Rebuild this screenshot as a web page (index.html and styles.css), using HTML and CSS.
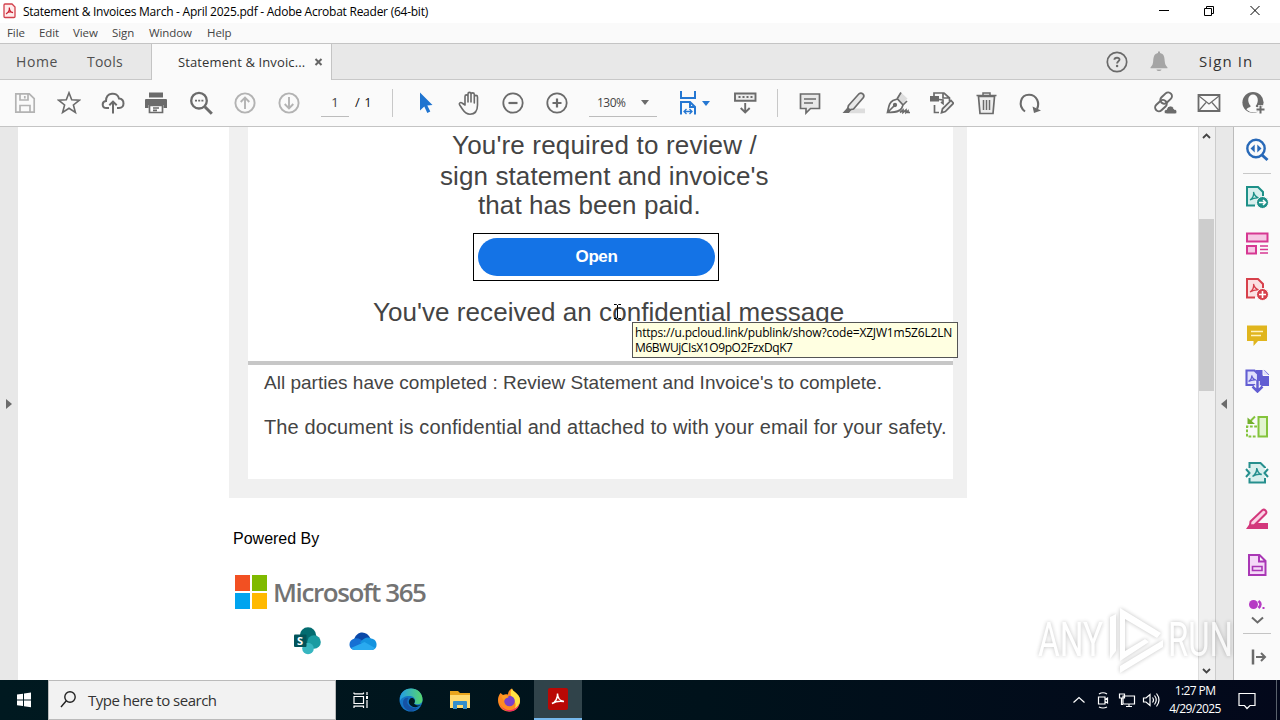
FILE: index.html
```html
<!DOCTYPE html>
<html lang="en">
<head>
<meta charset="utf-8">
<title>Statement &amp; Invoices March - April 2025.pdf - Adobe Acrobat Reader (64-bit)</title>
<link rel="stylesheet" href="styles.css">
</head>
<body>
<header class="titlebar">
  <svg class="app-icon" width="13" height="16" viewBox="0 0 13 16"><path d="M2 1h7l3 3v9.500q0 1-1 1H2q-1 0-1-1V2q0-1 1-1z" fill="#ffecec" stroke="#d3404c" stroke-width="1.300"/><path d="M3 11c2-1 3.600-4 3.300-6.500M6.300 4.500C6.500 7.500 8 9.500 10 9.600M3.500 10.500C5 9 8 8.700 10 9.600" fill="none" stroke="#c92030" stroke-width="1.200"/></svg>
  <span class="title-text">Statement &amp; Invoices March - April 2025.pdf - Adobe Acrobat Reader (64-bit)</span>
  <svg class="win-buttons" width="116" height="23" viewBox="0 0 116 23" fill="none" stroke="#000" stroke-width="1"><path d="M5 10.500h10M50.500 8.500h7v7h-7zM52.500 8.500v-2h7v7h-2M96.500 6l9 9M105.500 6l-9 9"/></svg>
</header>
<nav class="menubar"><span class="m-file">File</span><span class="m-edit">Edit</span><span class="m-view">View</span><span class="m-sign">Sign</span><span class="m-window">Window</span><span class="m-help">Help</span></nav>
<div class="tabs">
  <span class="tab-home">Home</span><span class="tab-tools">Tools</span>
  <div class="tab-doc"><span class="tab-label">Statement &amp; Invoic...</span><svg width="9" height="9" viewBox="0 0 9 9"><path d="M1.500 1l6 6M7.500 1l-6 6" stroke="#666" stroke-width="2"/></svg></div>
  <div class="account">
    <svg width="22" height="22" viewBox="0 0 22 22"><circle cx="11" cy="11" r="9.700" fill="none" stroke="#6a6a6a" stroke-width="1.700"/><path d="M8.400 8.700C8.500 6 13.700 6 13.500 8.800c-.1 1.600-2.400 1.500-2.400 3.700" fill="none" stroke="#6a6a6a" stroke-width="1.900"/><circle cx="11.100" cy="15" r="1.200" fill="#6a6a6a"/></svg>
    <svg class="bell" width="18" height="21" viewBox="0 0 18 21" fill="#a5a5a5"><path d="M8 2V.5h2V2c4 .8 4.500 4 4.700 8 .2 3 1 4.500 2.800 6.500v.8H.5v-.8C2.300 14.500 3 13 3.200 10 3.500 6 4 2.800 8 2zM6.500 18.500h5c-.5 2-4.500 2-5 0z"/></svg>
    <span class="signin">Sign In</span>
  </div>
</div>
<div class="toolbar">
  <div class="group first">
    <svg viewBox="0 0 24 24" fill="none" stroke="#b3b3b3" stroke-width="1.700"><path d="M2.800 2.800h13.500l4.900 4.900v13.500H2.800zM7 3v6h8V3M7 21v-6.500h10V21M11.800 5v2.500"/></svg>
    <svg viewBox="0 0 24 24" fill="none" stroke="#6b6b6b" stroke-width="1.600"><path d="M12 1.800l2.700 7 7.700.4-6 4.800 2 7.500-6.400-4.200-6.400 4.200 2-7.500-6-4.800 7.700-.4z"/></svg>
    <svg viewBox="0 0 24 24" fill="none" stroke="#6b6b6b" stroke-width="2"><path d="M8 17H5.500C.5 17 .5 10.500 5 10c0-9 11.500-9.500 13-2.500 6 .5 6 9.500 0 9.500h-2M12 22.500V11M8.300 14.300L12 10.600l3.700 3.700"/></svg>
    <svg viewBox="0 0 24 24"><path d="M4 1.500h14v5H4zM1 8h20q1 0 1 1v8h-3.500v-3h-15v3H0V9q0-1 1-1z" fill="#6b6b6b"/><path d="M4.500 14.500h13v7h-13zM8 17h6M8 19.300h4" fill="#fff" stroke="#6b6b6b" stroke-width="1.700"/></svg>
    <svg viewBox="0 0 24 24" fill="none" stroke="#6b6b6b" stroke-width="2.300"><circle cx="10" cy="9.700" r="7.800"/><path d="M15.800 15.700l7 7" stroke-width="3"/><path d="M6 9.700h2m1.200 0h2m1.200 0h2" stroke-width="1.800"/></svg>
    <svg viewBox="0 0 24 24" fill="none" stroke="#b3b3b3" stroke-width="1.900"><circle cx="12" cy="12" r="9.600"/><path d="M12 18V7M7.700 11L12 6.700l4.300 4.300"/></svg>
    <svg viewBox="0 0 24 24" fill="none" stroke="#b3b3b3" stroke-width="1.900"><circle cx="12" cy="12" r="9.600"/><path d="M12 6v11M7.700 13l4.300 4.300 4.300-4.300"/></svg>
  </div>
  <div class="pager"><span class="page-box">1</span><span class="page-total">/ 1</span></div>
  <div class="group">
    <svg viewBox="0 0 24 24" fill="#1f74d0"><path d="M7 1.500v18l4.300-4 3 6.500 3-1.400-3-6.100 5.200-.4z"/></svg>
    <svg viewBox="0 0 24 24" fill="none" stroke="#6b6b6b" stroke-width="1.600" stroke-linejoin="round"><g transform="translate(1 0)"><path d="M7 14V5.500c0-2.200 3-2.200 3 0V11 3c0-2.200 3-2.200 3 0v8 -7.500c0-2.200 3.300-2.200 3.300 0V12 6c0-2.200 3.200-2.200 3.200 0v8c0 6-3 9.200-7.500 9.200-4 0-5.500-2-7.500-5L1.700 14c-1.300-2 1-3.200 2.300-2z"/></g></svg>
    <svg viewBox="0 0 24 24" fill="none" stroke="#6b6b6b" stroke-width="1.800"><circle cx="12" cy="12" r="9.700"/><path d="M7.500 12h9" stroke-width="2.200"/></svg>
    <svg viewBox="0 0 24 24" fill="none" stroke="#6b6b6b" stroke-width="1.800"><circle cx="12" cy="12" r="9.700"/><path d="M7.500 12h9M12 7.500v9" stroke-width="2.200"/></svg>
  </div>
  <div class="zoom-box"><span class="zoom-value">130%</span><i class="caret"></i></div>
  <div class="fit"><svg viewBox="0 0 18 26" width="18" height="26" fill="none" stroke="#2577d2" stroke-width="2"><path d="M2 1v7h14V1M2 24.500V12h9l5 5v7.500M11 12v5h5"/><path d="M5 21.500h8M7.500 19L5 21.500 7.500 24M10.500 19l2.500 2.500-2.500 2.500" stroke-width="1.300"/></svg><i class="caret blue"></i></div>
  <div class="keyboard"><svg viewBox="0 0 24 24" fill="none" stroke="#6b6b6b" stroke-width="1.900"><path d="M2 2.500h20.500v7.200H2z" fill="#ededed"/><path d="M5.500 6h14" stroke-dasharray="2 2"/><path d="M12.200 12v9M7.700 17l4.500 4.500 4.500-4.500"/></svg></div>
  <div class="group">
    <svg viewBox="0 0 24 24" fill="#e8e8e8" stroke="#6b6b6b" stroke-width="1.700"><path d="M2.500 3h19v14.500h-9L8 22v-4.500H2.500z"/><path d="M6 8h12M6 12h9" stroke-width="1.300"/></svg>
    <svg viewBox="0 0 24 24" fill="#e8e8e8" stroke="#6b6b6b" stroke-width="1.700"><path d="M12 17.500h11v4.800H7z" stroke="none" fill="#ddd"/><path d="M6.500 14.500L17 2.800q2-1.600 3.800.1t.6 3.700L11.500 18l-4 .8-1.700-1.600z"/><path d="M5.500 16.500L.5 22h6.500l2.500-3z" fill="#6b6b6b" stroke="none"/></svg>
    <svg viewBox="0 0 24 24" fill="none" stroke="#6b6b6b" stroke-width="1.700"><path d="M15 1.500l6.500 6-4.500 5-6-5z" fill="#ddd" stroke="none"/><path d="M1.500 21.500C3 15 3 12 7 9.500l4.500-1.500 5.500 6-1.500 3.500C13 21.500 8 21 1.500 21.500zM2 21l6.500-6.500M11 8l4-6.500M17 14l4-4"/><circle cx="9" cy="14" r="1.300" fill="#6b6b6b"/><path d="M14 21.500l3-2.500v2.500l3-2.500v2.500l2-1.500v1.500h2"/></svg>
    <svg viewBox="0 0 24 24" fill="none" stroke="#6b6b6b" stroke-width="1.700"><path d="M4 5V2h10l5.500 5v3M13 2v5h6M4.500 14v7.500H9"/><path d="M0 5h9v5.500H0z" fill="#6b6b6b" stroke="none"/><path d="M11.500 21.800l1-4L21 9.500l2.500 2.700-8.200 8.400z" fill="#eee"/><path d="M9 8.500l4 .5v3.500l-2-1.500"/></svg>
    <svg viewBox="0 0 24 24" fill="#eee" stroke="#6b6b6b" stroke-width="1.700"><g transform="translate(.5 0)"><path d="M4 5.500h16l-1.500 17h-13z"/><path d="M2 4.500h20M8.500 4V2h7v2M9 9v10M12 9v10M15 9v10" stroke-width="1.500"/></g></svg>
    <svg viewBox="0 0 24 24" fill="none" stroke="#6b6b6b" stroke-width="2.100"><path d="M7 20.500C-.5 15 2.500 3.800 11 3.800c8 0 11 8.500 8 14.200"/><path d="M14.500 15.500l1.500 6.500 7-2.500z" fill="#6b6b6b" stroke="none"/></svg>
  </div>
  <div class="group share">
    <svg viewBox="0 0 24 24" fill="none" stroke="#6b6b6b" stroke-width="2"><g transform="rotate(-43 10 11)"><rect x="8.500" y="6.500" width="13" height="7.500" rx="3.700"/><rect x="-.5" y="8.500" width="13" height="7.500" rx="3.700"/></g><path d="M14 23c-4 0-3.500-4.500-.5-4.500.8-4.800 7-4.500 7.500-.4 4 .4 3.500 4.900 1 4.900z" fill="#6b6b6b" stroke="#fafafa" stroke-width="1"/></svg>
    <svg viewBox="0 0 24 24" fill="none" stroke="#6b6b6b" stroke-width="1.800"><path d="M1.500 4h21v16h-21z"/><path d="M2 5l10 8 10-8M2 19.500l7-8M22 19.500l-7-8" stroke-width="1.200"/></svg>
    <svg viewBox="0 0 24 24"><circle cx="12" cy="11.500" r="10.600" fill="#6b6b6b"/><path d="M5.500 18.500c1-2.500 4-1.500 4.200-3.500C5.500 10.500 7 3.500 12 3.500S18.500 10.500 14.700 15c.3 2 3 1 4.300 3.500-4 4-9.500 4-13.500 0z" fill="#fafafa"/><path d="M14.500 18.500h9M19.500 14v9" stroke="#fafafa" stroke-width="4.500"/><path d="M15.500 18.500h8M19.500 14.500v8" stroke="#6b6b6b" stroke-width="2"/></svg>
  </div>
</div>
<main class="workspace">
  <aside class="left-rail"><i class="tri-right"></i></aside>
  <section class="document">
    <div class="page-frame">
      <div class="page">
        <p class="headline h1">You're required to review /</p>
        <p class="headline h2">sign statement and invoice's</p>
        <p class="headline h3">that has been paid.</p>
        <div class="link-box"><div class="open-button"><span class="open-label">Open</span></div></div>
        <p class="headline received">You've received an confidential message</p>
        <div class="rule"></div>
        <p class="note n1">All parties have completed : Review Statement and Invoice's to complete.</p>
        <p class="note n2">The document is confidential and attached to with your email for your safety.</p>
      </div>
    </div>
    <p class="powered">Powered By</p>
    <div class="ms-brand"><div class="ms-logo"><i class="red"></i><i class="green"></i><i class="cyan"></i><i class="yellow"></i></div><span class="ms-name">Microsoft 365</span></div>
    <div class="products">
      <svg width="27" height="28" viewBox="0 0 27 28"><circle cx="14" cy="8.500" r="8.200" fill="#036c70"/><circle cx="20" cy="15" r="6.800" fill="#1a9ba1"/><circle cx="14" cy="21.500" r="5.800" fill="#37b6c0"/><rect y="7.500" width="12.500" height="12.500" rx="1" fill="#03545a"/><text x="3" y="17.500" class="sp-letter">S</text></svg>
      <svg width="28" height="19" viewBox="0 0 28 19"><path d="M5 8C7-1.500 18-2 21.500 6.500L14 14z" fill="#0a48a8"/><path d="M6 18C-1 18-1.500 8 5.500 6.500c4-1 7 1.500 10 3.500l4 8z" fill="#1670d4"/><path d="M11 10.500c4-5 8-6 11-4 7 .5 7.500 11 1 11.500z" fill="#1493df"/><path d="M2 16l13.500-6L26 16q-1 2-4 2H6q-3 0-4-2z" fill="#29aaf0"/></svg>
    </div>
    <div class="tooltip"><span class="tip1">https://u.pcloud.link/publink/show?code=XZJW1m5Z6L2LN</span><span class="tip2">M6BWUjCIsX1O9pO2FzxDqK7</span></div>
    <svg class="cursor" width="9" height="17" viewBox="0 0 9 17"><path d="M1 1.500h2.500l1 1 1-1H8M4.500 2v13M1 15.500h2.500l1-1 1 1H8" fill="none" stroke="#000"/></svg>
  </section>
  <div class="scrollbar"><svg width="9" height="6" viewBox="0 0 9 6"><path d="M1 5l3.500-3.500L8 5" fill="none" stroke="#444" stroke-width="1.800"/></svg><div class="thumb"></div><svg class="down" width="9" height="6" viewBox="0 0 9 6"><path d="M1 1l3.500 3.500L8 1" fill="none" stroke="#444" stroke-width="1.800"/></svg></div>
  <aside class="right-rail"><i class="tri-left"></i></aside>
  <aside class="tools">
    <div class="tool search-tool"><svg viewBox="0 0 24 24" fill="none" stroke="#2869b8" stroke-width="2.400"><circle cx="11" cy="10.500" r="8.700"/><path d="M17 17l5.500 5" stroke-width="3"/><path d="M9.700 6.500v8L5.500 10.500zM12.300 6.500v8l4.200-4z" fill="#2869b8" stroke="none"/></svg></div>
    <div class="tool"><svg viewBox="0 0 24 24" fill="#d8efed" stroke="#1d9088" stroke-width="2"><path d="M10 20.500H2V2h11l5 5v4"/><path d="M5 15c3-2 4-5 3.500-8 1 4 3 5.500 6 6-3-.5-6 0-9.500 2" fill="none" stroke-width="1.200"/><circle cx="17.500" cy="17.500" r="6" fill="#1d9088" stroke="#fafafa" stroke-width="1"/><path d="M14 17.500h6M18 15l2.500 2.500L18 20" fill="none" stroke="#fff" stroke-width="1.500"/></svg></div>
    <div class="tool"><svg viewBox="0 0 24 24" fill="#f6c8e4" stroke="#d63892" stroke-width="2"><path d="M2 2.500h20.500v8H2zM2 15h9v7.500H2z"/><path d="M15 15h8M15 18.500h8M15 22h8" stroke-width="1.400"/></svg></div>
    <div class="tool"><svg viewBox="0 0 24 24" fill="#fbe1e2" stroke="#d7404b" stroke-width="2"><path d="M10 20.500H2V2h11l5 5v4"/><path d="M5 15c3-2 4-5 3.500-8 1 4 3 5.500 6 6-3-.5-6 0-9.500 2" fill="none" stroke-width="1.200"/><circle cx="17.500" cy="17.500" r="6" fill="#d7404b" stroke="#fafafa" stroke-width="1"/><path d="M14 17.500h7M17.500 14v7" stroke="#fff" stroke-width="1.600"/></svg></div>
    <div class="tool"><svg viewBox="0 0 24 24" fill="#e0b51d"><path d="M2 2.500h20v15.500H13l-4.500 5V18H2z"/><path d="M6 8.500h12M6 12.500h10" stroke="#fff3c0" stroke-width="1.700"/></svg></div>
    <div class="tool"><svg viewBox="0 0 24 24" fill="#e0e0fc" stroke="#625ed2" stroke-width="2.100"><path d="M12 2h7l4 4v10h-11z" fill="#625ed2"/><path d="M18 0v6.500h6" stroke="#fafafa" stroke-width="1"/><path d="M1.500 1.500H9.500l3.500 3.500v11H1.500z"/><path d="M3.500 12.500c3-2 3.500-3.500 3.200-6 .8 3 2 4.200 4.500 4.500-3-.4-5 0-7.700 1.500" fill="none" stroke-width="1.200"/><path d="M12.500 12v9.500M7.800 17.500l4.700 4.700 4.700-4.700" fill="none" stroke="#fafafa" stroke-width="4.500"/><path d="M12.500 11v11M7.500 17.500l5 5 5-5" fill="none" stroke="#625ed2" stroke-width="2.500"/></svg></div>
    <div class="tool"><svg viewBox="0 0 24 24" fill="none" stroke="#84c43c" stroke-width="2"><path d="M13.500 2h8.500v19.500h-8.500z" fill="#e2f4d0"/><path d="M12 11.500H2v10h10" stroke-dasharray="2.800 1.500"/><path d="M10 1.500L5 6.500" /><path d="M2.500 2.500V9H10z" fill="#73af2d" stroke="none"/></svg></div>
    <div class="tool"><svg viewBox="0 0 24 24" fill="#d8efed" stroke="#268f8e" stroke-width="2"><path d="M4.500 7V2h11L20 6.500V7M4.500 17v4.500H20V17"/><path d="M4 7h16v10H4z" stroke="none"/><path d="M1 8l3.500 4L1 16M23 8l-3.500 4 3.500 4" fill="none"/><path d="M7.500 15.500C11 13 12 11 11.800 7c.7 4.500 2 6 5 6.500-3.500-.7-6.500 0-9.300 2" fill="none" stroke-width="1.500"/></svg></div>
    <div class="tool"><svg viewBox="0 0 24 24" fill="#fbd3e6" stroke="#d3387c" stroke-width="2"><path d="M1 22l3.500-5H8l4-1h11v6z" fill="#d3387c" stroke="none"/><path d="M5.500 14.500L17.500 3q1.500-1 3 .5t.5 3L9.500 18l-4.500.5z"/></svg></div>
    <div class="tool"><svg viewBox="0 0 24 24" fill="#f4d9f7" stroke="#a937b5" stroke-width="2"><path d="M4 2h10.500l6 6v14H4zM14 2v6.500h6"/><path d="M7.500 13.500h9.500v4H7.500z" stroke-width="1.600"/></svg></div>
    <div class="tool cut"><svg width="18" height="9" viewBox="0 0 18 9"><circle cx="5.500" cy="4.500" r="4.500" fill="#b63bc4"/><path d="M10.500 1q4 3 0 7" fill="none" stroke="#b63bc4" stroke-width="2.500"/><path d="M14.500 7h2v2h-2z" fill="#b63bc4"/></svg></div>
    <svg class="more" width="13" height="8" viewBox="0 0 13 8"><path d="M1 1.500l5.500 5 5.500-5" fill="none" stroke="#6b6b6b" stroke-width="2"/></svg>
    <div class="collapse"><svg width="17" height="16" viewBox="0 0 17 16"><path d="M2 .5v15" stroke="#6b6b6b" stroke-width="2.500"/><path d="M5 8h9M10 4l4 4-4 4" fill="none" stroke="#6b6b6b" stroke-width="2"/></svg></div>
  </aside>
  <svg class="watermark" width="212" height="80" viewBox="0 0 212 80"><g class="wm-shape"><text x="4" y="53" textLength="65" lengthAdjust="spacingAndGlyphs">ANY</text><text x="134" y="53" textLength="65" lengthAdjust="spacingAndGlyphs">RUN</text><path d="M76 56V14l6-3v37zM86 5l41 25-4 5-32-19v32l20-12 4 3-29 19zM86 63l43-26v7L86 70z"/></g></svg>
</main>
<footer class="taskbar">
  <div class="start"><svg width="16" height="16" viewBox="0 0 16 16" fill="#fff"><path d="M1 2.500l6-.8v5.700H1zM8 1.600l7-1v6.800H8zM1 8.400h6v5.700l-6-.8zM8 8.400h7v6.800l-7-1z"/></svg></div>
  <div class="search"><svg width="18" height="20" viewBox="0 0 18 20" fill="none" stroke="#222" stroke-width="1.400"><circle cx="11" cy="7" r="5.200"/><path d="M7.300 10.700L2 17"/></svg><span class="search-text">Type here to search</span></div>
  <div class="apps">
    <div class="app"><svg width="18" height="18" viewBox="0 0 18 18" fill="none" stroke="#fff" stroke-width="1.200"><path d="M2 5.500h9.500v7H2zM2 3V1.500M11.500 3V1.500M2 2.800h9.500M2 17v-1.800h9.500V17M15 1v3M15 9v8"/><path d="M14 5h2v3h-2z" fill="#fff" stroke="none"/></svg></div>
    <div class="app"><svg width="24" height="24" viewBox="0 0 24 24"><defs><linearGradient id="eg"><stop stop-color="#239de5"/><stop offset="1" stop-color="#58d66d"/></linearGradient></defs><circle cx="12" cy="12" r="11.500" fill="#1475c4"/><path d="M1 10C3-4 24-2 23.500 12c0 4.500-6 5-8.500 3.500 3-3 0-8-5-7.500C6 8 2 10 1 13z" fill="url(#eg)"/><path d="M9.500 10C6 15 10 21 19 19.500c-4 6-15 4-15-5C4 11 7 9 9.500 10z" fill="#1552a4"/><path d="M10.500 11.500c-2 3 .5 6.500 4 7.500 3 .5 5-.5 7.500-2-4 1-6 0-7-1.500 1.500-1.500 1-4-.5-5-1.500-.8-3-.3-4 1z" fill="#001821"/></svg></div>
    <div class="app"><svg width="24" height="24" viewBox="0 0 24 24"><path d="M2 3h8l2 2h10v14H2z" fill="#e9a51d"/><path d="M2 7h20v13H2z" fill="#ffda70"/><path d="M5 21v-7q0-1 1-1h12q1 0 1 1v7h-4v-4H9v4z" fill="#328dcc"/></svg></div>
    <div class="app"><svg width="24" height="24" viewBox="0 0 24 24"><path d="M12 23.500C5 23.500 1 18 1 12c0-3 1-5 2.500-7L6 7c2-1 3-1 5-.5C11 4 12.500 1.500 15 .5c0 3 8 5 8 12 0 6-4 11-11 11z" fill="#ff8b20"/><path d="M15 .5c0 3 8 5 8 12 0 3-2 7-5 8 2-5-1-8-3-11-1.500-2-2-6 0-9z" fill="#ffe243"/><path d="M1.500 12C3 23 17 26 22 16c-1 10-18 11-20.500-4z" fill="#f32f62"/><circle cx="12.500" cy="13" r="5.300" fill="#7b41c9"/><path d="M4 8c3-2 6-1 8 1-2 1-4 1-5 4z" fill="#ff9d24"/></svg></div>
    <div class="app active"><svg width="20" height="22" viewBox="0 0 20 22"><rect width="20" height="22" rx="2" fill="#b90805"/><path d="M4 15.500c3.500-1 6-6 5.500-10 0 4 2.500 7.500 6.500 8-3.500-.7-8-.4-12 2z" fill="none" stroke="#fff" stroke-width="1.500"/></svg></div>
  </div>
  <div class="tray">
    <svg viewBox="0 0 20 20"><path d="M4.500 12.500l5.500-5 5.500 5"/></svg>
    <svg viewBox="0 0 20 20"><path d="M5.500 7h6.500v7H5.500zM12 9.500l2.500-1.500v5L12 11.500M6 4q4-2.500 8 0M6 17q4 2 8 0"/></svg>
    <svg viewBox="0 0 20 20"><path d="M6 6h11.500v8H6zM9 16.500h6M12 14v2.500M2.500 4h5v4h-5zM4.500 8v6.500H6"/></svg>
    <svg viewBox="0 0 20 20"><path d="M2.500 8h2.500l4-3.500v11L5 12H2.500zM11.500 7.500q2 2.500 0 5M13.500 5.500q3.500 4.500 0 9M15.500 3.500q5 6.500 0 13"/></svg>
    <div class="clock"><span class="time">1:27 PM</span><span class="date">4/29/2025</span></div>
    <svg class="notify" viewBox="0 0 20 20"><path d="M2 3.500h16v12h-5L10 18.500 7.500 15.500H2z"/></svg>
    <i class="show-desktop"></i>
  </div>
</footer>
</body>
</html>
```
FILE: styles.css
```css
* { box-sizing: border-box; }
body { margin: 0; width: 1280px; height: 720px; overflow: hidden; display: flex; flex-direction: column; font-family: "Open Sans", "Noto Sans", sans-serif; background: #fff; color: #111; }
p { margin: 0; }
span, p { white-space: nowrap; }
svg { display: block; flex: none; }
.titlebar { height: 23px; flex: none; display: flex; align-items: center; background: #fff; }
.app-icon { margin: 0 7px 2px 3px; }
.title-text { font-size: 12px; letter-spacing: -.25px; color: #000; }
.win-buttons { margin-left: auto; margin-right: 10px; }
.menubar { height: 20px; flex: none; display: flex; align-items: center; background: #fafafa; font-size: 11.5px; letter-spacing: -.1px; color: #444; padding: 0 0 2px 7px; }
.menubar span { flex: none; }
.m-file { width: 32px; } .m-edit { width: 34px; } .m-view { width: 39px; } .m-sign { width: 37px; } .m-window { width: 58px; }
.tabs { height: 37px; flex: none; display: flex; align-items: center; background: #e8e8e8; border-top: 1px solid #c4c4c4; border-bottom: 1px solid #c8c8c8; font-size: 14px; color: #505050; }
.tab-home { width: 71px; margin-left: 16px; letter-spacing: .6px; }
.tab-tools { width: 64px; letter-spacing: .2px; }
.tab-doc { width: 181px; height: 36px; margin-bottom: -1px; background: #fafafa; border-left: 1px solid #c4c4c4; border-right: 1px solid #c4c4c4; display: flex; align-items: center; padding-left: 26px; color: #333; font-size: 13px; }
.tab-label { width: 136px; letter-spacing: .12px; }
.account { margin-left: auto; display: flex; align-items: center; width: 174px; color: #333; }
.bell { margin: 0 31px 0 22px; }
.signin { font-size: 15px; letter-spacing: 1.1px; margin-top: -2px; }
.toolbar { height: 47px; flex: none; display: flex; align-items: center; background: #fafafa; border-bottom: 1px solid #c4c4c4; }
.group { display: flex; flex: none; }
.group svg { width: 24px; height: 24px; margin: 0 10px; }
.first { margin-left: 3px; }
.pager { width: 82px; height: 28px; border-right: 1px solid #c8c8c8; display: flex; margin-right: 10px; padding-left: 10px; font-size: 13px; }
.page-box { width: 28px; height: 28px; border-bottom: 1px solid #bcbcbc; text-align: center; line-height: 27px; color: #444; }
.page-total { margin-left: 6px; line-height: 27px; letter-spacing: .6px; }
.zoom-box { width: 68px; height: 28px; margin-left: 10px; border-bottom: 1px solid #bcbcbc; display: flex; align-items: center; justify-content: space-between; padding: 0 8px 0 8px; font-size: 12px; color: #444; }
.zoom-value { letter-spacing: -.5px; }
.caret { border: 4px solid transparent; border-top: 5px solid #6b6b6b; border-bottom: 0; }
.caret.blue { border-top-color: #2577d2; }
.fit { display: flex; align-items: center; gap: 5px; margin-left: 22px; width: 54px; }
.keyboard { width: 45px; height: 28px; border-right: 1px solid #c8c8c8; display: flex; align-items: center; margin-right: 10px; }
.keyboard svg { width: 24px; height: 24px; }
.share { margin-left: auto; margin-right: 5px; }
.workspace { position: relative; flex: 1; min-height: 0; display: flex; }
.left-rail { width: 18px; background: #e8e8e8; display: flex; align-items: center; padding-left: 6px; }
.tri-right { border: 5px solid transparent; border-left: 6px solid #6b6b6b; border-right: 0; }
.document { position: relative; width: 1180px; background: #fff; padding-left: 211px; color: #444; }
.page-frame { width: 738px; height: 371px; padding: 0 14px 19px 19px; background: #f0f0f0; }
.page { height: 352px; background: #fff; font-family: "Liberation Sans", Arial, sans-serif; }
.headline { font-size: 26px; height: 30px; line-height: 30px; letter-spacing: .08px; }
.h1 { padding: 3px 0 0 204px; height: 33px; letter-spacing: .17px; }
.h2 { padding: 1px 0 0 192px; height: 31px; letter-spacing: .1px; }
.h3 { padding-left: 230px; height: 29px; margin-top: -1px; }
.link-box { width: 246px; height: 48px; margin: 14px 0 0 225px; border: 1px solid #000; padding: 4px 3px 4px 4px; }
.open-button { height: 38px; border-radius: 19px; background: #1473e6; display: flex; align-items: center; justify-content: center; }
.open-label { color: #fff; font-weight: bold; font-size: 17px; letter-spacing: -.4px; }
.headline.received { margin: 16px 0 0 125px; letter-spacing: .05px; }
.rule { height: 4px; margin-top: 34px; background: #c7c7c7; }
.note { padding-left: 16px; height: 30px; line-height: 30px; }
.n1 { font-size: 19px; margin-top: 3px; letter-spacing: .01px; }
.n2 { font-size: 20px; margin-top: 14px; letter-spacing: .12px; }
.powered { margin: 30px 0 0 4px; font: 16px/22px "Liberation Sans", Arial, sans-serif; color: #000; }
.ms-brand { display: flex; align-items: center; height: 34px; margin: 25px 0 0 6px; }
.ms-logo { width: 32px; height: 34px; display: grid; grid-template-columns: 1fr 1fr; grid-template-rows: 1fr 1fr; gap: 2px; }
.red { background: #f25022; } .green { background: #7fba00; } .cyan { background: #00a4ef; } .yellow { background: #ffb900; }
.ms-name { margin-left: 6px; font-size: 26px; font-weight: 600; color: #737373; letter-spacing: -1.4px; }
.products { display: flex; align-items: center; gap: 28px; margin: 18px 0 0 65px; }
.sp-letter { font: bold 11px "Open Sans", sans-serif; fill: #fff; }
.tooltip { position: absolute; left: 614px; top: 195px; width: 326px; height: 36px; border: 1px solid #555; background: #ffffe1; color: #000; font-size: 12px; line-height: 15px; padding: 2px 0 0 2px; display: flex; flex-direction: column; }
.tip1 { letter-spacing: -.18px; }
.tip2 { letter-spacing: -.4px; }
.cursor { position: absolute; left: 595px; top: 176px; }
.scrollbar { width: 18px; flex: none; background: #f0f0f0; border-left: 1px solid #ddd; border-right: 1px solid #ccc; display: flex; flex-direction: column; align-items: center; padding: 6px 1px 6px 0; }
.thumb { width: 15px; height: 172px; margin-top: 80px; background: #cdcdcd; }
.down { margin-top: auto; }
.right-rail { width: 17px; flex: none; background: #e8e8e8; display: flex; align-items: center; padding-left: 5px; }
.tri-left { border: 5px solid transparent; border-right: 6px solid #6b6b6b; border-left: 0; }
.tools { width: 47px; flex: none; background: #fafafa; border-left: 1px solid #bbb; display: flex; flex-direction: column; align-items: center; }
.tool { height: 46px; width: 28px; flex: none; display: flex; align-items: center; justify-content: center; }
.tool svg { width: 24px; height: 24px; }
.search-tool { height: 47px; border-bottom: 1px solid #c8c8c8; }
.cut { height: 26px; padding-top: 7px; }
.cut svg { width: 18px; height: 9px; }
.more { margin-top: 2px; }
.collapse { width: 28px; margin-top: 9px; border-top: 1px solid #c4c4c4; padding: 15px 0 0 8px; }
.watermark { position: absolute; left: 1034px; top: 476px; filter: drop-shadow(0 0 2px rgba(0,0,0,.35)); opacity: .7; }
.wm-shape { fill: #fff; }
.wm-shape text { font: 49px Roboto, sans-serif; }
.taskbar { height: 40px; flex: none; display: flex; background: linear-gradient(90deg, #001920, #00121b 55%, #03081b); color: #fff; }
.start { width: 48px; flex: none; display: flex; align-items: center; padding-left: 16px; }
.search { width: 288px; flex: none; background: #f2f2f2; border: 1px solid #bbb; display: flex; align-items: center; color: #333; font-size: 15px; padding-left: 10px; }
.search-text { margin-left: 11px; letter-spacing: -.5px; }
.apps { display: flex; margin-left: 1px; }
.app { width: 49px; display: flex; align-items: center; justify-content: center; }
.app:first-child { padding-right: 2px; }
.active { margin-left: 1px; width: 48px; background: #30434a; border-bottom: 2px solid #76b9ed; }
.tray { margin-left: auto; display: flex; align-items: center; width: 211px; }
.tray svg { width: 20px; height: 20px; margin-right: 4px; fill: none; stroke: #fff; stroke-width: 1.2; }
.clock { width: 60px; flex: none; display: flex; flex-direction: column; align-items: center; font-size: 12px; line-height: 18px; letter-spacing: -.6px; }
.tray .notify { margin: 0 19px 0 12px; }
.show-desktop { width: 1px; height: 40px; background: #59616c; }
```
